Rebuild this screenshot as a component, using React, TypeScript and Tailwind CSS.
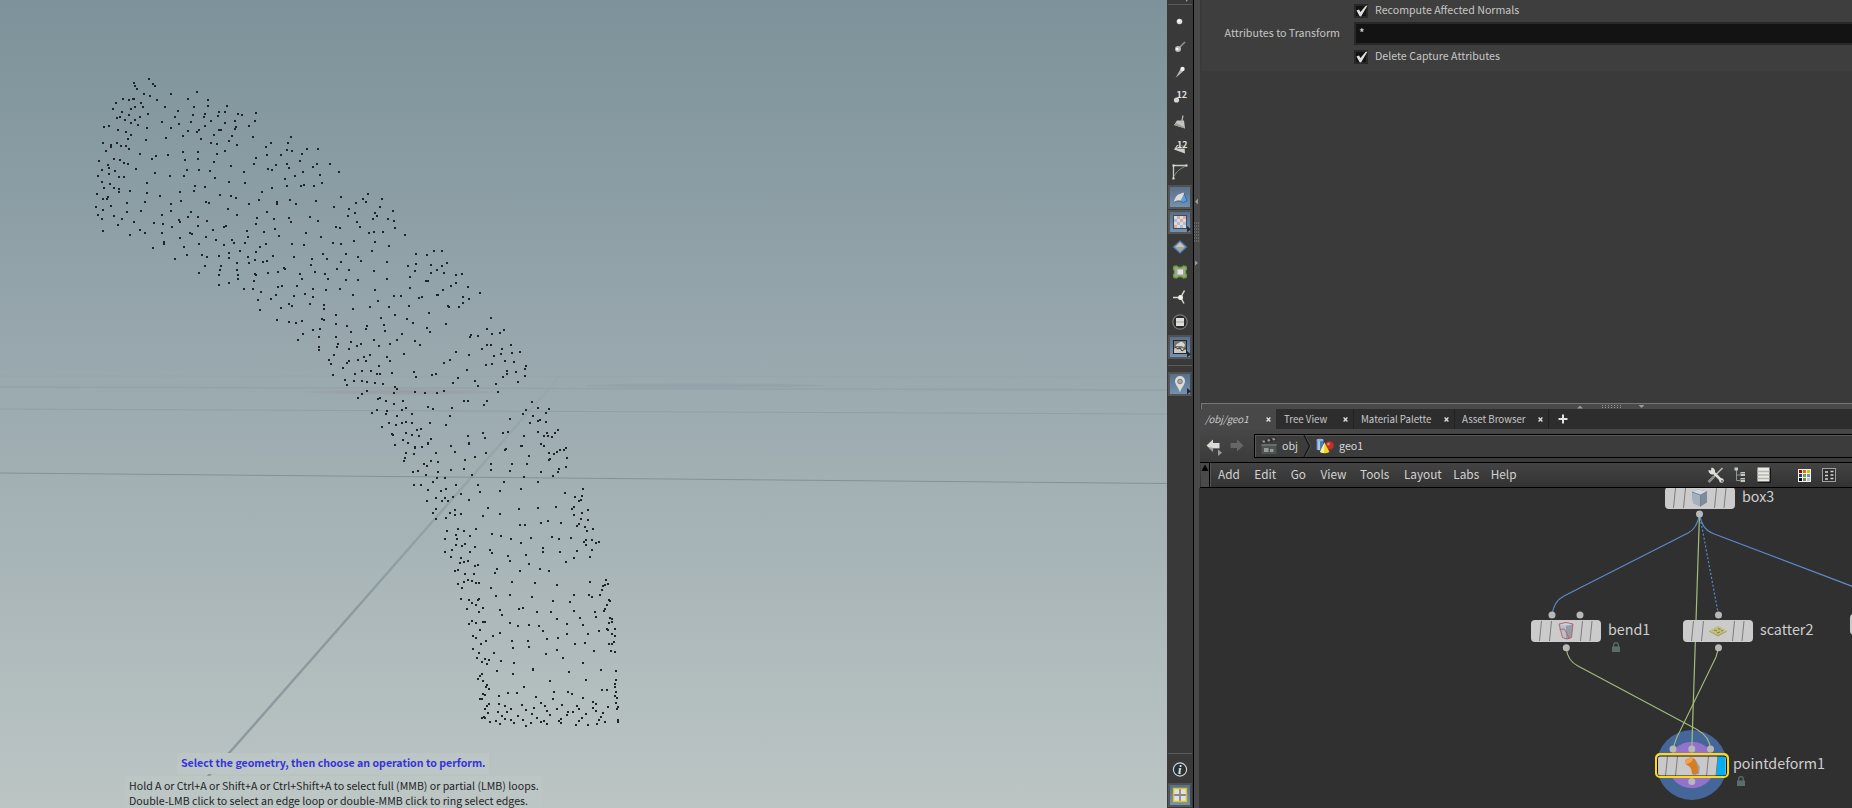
import React from "react";

/* ------------------------------------------------------------------ */
/* Point cloud: three patches, local coordinates in thirds of a pixel  */
/* ------------------------------------------------------------------ */

type Patch = { x: number; y: number; points: string };

const PATCHES: Patch[] = [
  {
    x: 80,
    y: 60,
    points:
      "207,56 162,69 166,79 171,87 220,73 226,79 191,101 210,109 230,121 274,101 352,96 324,117 385,120 384,139 441,139 129,117 147,121 159,118 162,117 108,128 184,130 99,147 153,147 165,141 189,141 127,156 148,164 203,162 256,142 293,152 343,141 339,166 374,162 417,156 435,156 414,168 372,171 474,162 485,165 528,159 525,184 120,171 110,174 134,181 165,180 180,171 153,189 174,194 245,186 285,171 296,192 333,186 392,184 434,189 464,182 506,197 71,202 88,197 114,210 138,216 200,204 274,205 376,198 469,202 466,208 422,210 417,210 324,213 356,211 350,217 308,227 363,237 402,226 456,228 448,244 519,231 153,225 144,237 197,241 258,234 392,250 412,253 471,255 69,250 111,250 93,256 93,262 123,258 138,258 148,268 77,272 179,282 217,297 228,289 264,285 308,275 355,277 314,301 354,297 412,282 435,274 57,303 103,296 121,299 133,309 144,312 402,307 453,318 83,316 87,323 67,330 106,332 169,328 88,341 117,351 132,351 53,349 226,339 270,348 312,349 321,330 357,331 391,334 404,353 448,366 66,367 90,372 72,384 102,384 117,386 116,395 150,394 201,369 201,399 241,409 345,378 375,381 341,394 300,396 420,405 452,407 468,414 51,402 69,417 84,411 80,418 94,437 48,441 142,429 195,426 272,431 302,424 378,427 386,429 445,447 472,466 68,450 53,466 66,477 102,468 125,477 141,457 183,453 163,486 115,496 69,514 150,526 180,511 194,520 222,489 249,492 245,466 273,453 333,456 324,472 354,471 297,481 300,486 381,483 276,501 353,499 433,501 439,499 399,511 246,519 330,519 337,523 379,532 409,541 301,535 252,546 252,551 218,564 312,562 357,552 321,586 285,597 367,586 381,590 417,589 448,580 447,594 432,555 456,541 463,550 481,572 470,608 374,619 358,638 422,619 421,629 417,645 471,630 474,646 474,657 447,669 417,675 495,549 632,230 624,249 574,249 558,262 681,266 714,267 621,270 636,274 561,285 604,284 667,281 528,294 523,311 661,303 588,316 621,311 627,324 565,327 576,330 712,311 698,320 751,313 493,335 670,335 776,337 645,348 719,345 615,357 494,370 576,384 621,378 663,379 672,375 702,378 726,370 546,396 537,420 508,431 591,427 592,433 631,419 648,432 708,423 783,411 762,441 561,456 530,475 581,476 626,475 634,487 690,471 713,484 528,492 585,508 500,514 552,516 598,529 678,519 722,531 768,501 780,504 504,530 539,560 558,552 636,552 672,555 528,576 504,590 580,588 643,592 730,581 696,597 741,597 759,550 784,553 797,582 782,607 525,600 508,610 550,607 562,604 612,624 614,627 593,636 565,639 525,642 528,645 523,664 660,642 693,615 705,636 736,643 745,658 666,656 772,627 807,630 798,660 606,678 594,681 651,679 699,687 738,689 780,687 491,688 519,687 543,696 587,704 533,721 574,718 643,708 674,702 699,710 690,732 626,733 637,739 603,744 731,734 733,748 539,750 864,402 848,417 859,427 906,416 828,429 900,441 807,447 826,460 884,458 890,469 938,453 805,469 879,478 924,476 942,483 831,487 840,501 944,504 866,520 883,517 910,517 822,543 885,546 926,559 875,572 834,590 843,604 921,607 882,633 922,658 834,661 886,690 819,706 943,709 895,724 869,742 927,741 819,747",
  },
  {
    x: 240,
    y: 180,
    points:
      "495,165 528,222 562,225 582,214 606,213 527,252 504,258 573,255 606,259 621,249 590,269 524,273 574,280 613,280 648,286 667,283 509,291 559,303 565,303 648,308 633,319 683,321 509,323 608,330 720,339 592,345 595,346 537,354 547,352 483,347 670,350 686,357 670,370 657,381 508,379 625,379 628,382 568,400 501,417 520,430 618,432 561,444 570,456 486,463 525,483 540,495 491,523 752,414 741,447 792,450 756,462 779,460 693,466 690,470 714,468 742,495 754,494 813,495 726,507 787,507 816,519 840,517 784,523 761,529 649,516 688,525 630,540 612,549 795,544 822,546 738,556 757,552 858,558 856,567 680,569 802,574 801,581 828,576 856,589 790,592 654,594 705,603 833,607 639,609 767,612 713,619 774,636 523,577 529,592 576,585 587,582 525,636 555,639 591,640 613,634 671,662 684,663 740,663 733,674 564,681 580,688 636,684 631,707 618,735 570,728 487,689 498,685 516,702 499,727 486,730 516,729 543,746 531,751 537,768 517,766 497,760 573,776 504,790 489,780 563,791 546,801 526,803 633,797 683,768 687,791 730,760 736,774 790,759 804,756 811,717 849,702 858,689 877,667 894,684 926,688 919,700 880,708 870,729 900,720 895,723 919,727 894,756 853,769 921,759 912,768 924,769 936,770 946,760 954,750 903,792 911,798 844,797 797,806 111,420 146,426 167,429 187,424 219,450 190,461 173,480 240,447 246,417 252,420 236,471 237,501 236,510 282,525 266,539 273,551 279,585 309,565 321,550 326,543 315,600 321,615 289,406 287,433 321,438 333,456 288,471 293,491 292,502 334,486 327,507 351,498 363,492 381,439 378,447 423,414 432,435 435,453 465,405 402,480 417,498 471,480 450,492 372,531 390,525 440,531 355,541 377,544 450,543 418,559 366,573 393,573 345,582 411,582 421,582 456,579 343,604 365,602 380,607 404,609 428,613 466,621 471,627 461,639 381,633 365,643 353,655 414,657 419,655 439,664 463,671 489,663 412,691 396,699 441,694 438,702 471,708 427,741 446,729 468,735 455,761 459,766 464,796",
  },
  {
    x: 340,
    y: 380,
    points:
      "164,196 198,219 222,222 195,234 193,244 226,202 246,201 264,190 287,218 332,197 345,216 387,190 405,230 438,219 494,210 497,207 545,197 566,227 603,192 612,198 628,219 643,222 651,216 661,209 672,210 678,205 681,233 630,238 628,241 251,253 261,258 274,243 294,246 218,277 234,273 295,277 258,286 291,294 315,294 279,306 333,271 372,268 375,240 454,252 453,271 517,253 560,253 510,273 603,276 658,266 678,260 653,277 639,287 553,290 397,286 222,315 243,315 264,330 303,333 318,327 348,315 413,314 492,307 593,307 480,333 542,327 419,336 364,341 339,351 315,354 306,363 324,364 288,354 261,363 387,360 729,326 675,339 727,347 705,351 722,360 718,363 289,388 279,399 345,389 330,400 345,405 363,402 318,414 288,418 444,385 429,408 480,403 537,388 593,384 648,381 703,380 695,386 745,391 727,398 702,405 722,417 744,420 717,431 711,438 735,442 741,453 760,446 540,435 554,435 604,430 624,424 663,429 355,446 321,453 371,453 409,448 347,464 390,468 314,478 350,477 456,462 483,468 512,477 574,475 543,489 636,471 657,477 693,474 738,480 732,486 738,494 756,480 767,488 776,486 347,495 376,492 366,498 405,501 337,510 316,517 391,517 450,511 456,519 333,531 363,534 504,529 510,543 558,525 609,504 609,516 659,516 712,514 756,510 750,530 703,534 677,547 360,550 372,546 385,543 405,558 414,555 566,553 344,574 354,570 375,582 402,582 464,578 472,567 540,574 601,567 628,573 384,601 396,603 373,607 353,613 408,609 418,610 366,624 515,606 585,610 454,625 652,616 751,606 798,600 804,613 796,616 790,618 785,631 780,645 748,646 757,651 467,647 510,646 575,652 363,657 386,659 418,656 414,660 396,669 407,675 381,688 430,684 418,697 480,690 486,705 537,688 550,685 592,697 633,697 640,663 691,666 702,646 701,694 651,717 806,661 809,664 800,675 796,686 792,694 765,697 768,711 810,714 817,716 721,714 396,723 407,729 387,732 430,725 434,727 420,749 509,730 535,739 567,734 597,739 610,754 681,732 729,736 807,728 815,725 802,747 805,749 825,748 815,762 824,767 778,753 744,762 399,769 408,773 458,769 479,760 438,784 423,792 399,807 516,784 565,783 519,803 567,802 621,777 654,773 682,763 705,792 736,788 807,791 815,791 823,787 813,812 825,816 761,813 652,811 618,822 670,834 417,819 462,819 411,834 434,837 446,840 426,846 442,851 484,842 522,848 730,850 578,870 580,867 471,874 520,883 688,877 783,870 828,873 420,888 426,882 415,896 429,902 629,903 739,899 828,899 440,915 437,920 446,926 552,921 825,913 825,920 786,930 801,930 429,941 435,946 477,949 503,938 531,940 643,936 684,935 697,941 588,951 638,957 729,954 829,937 826,948 831,954 421,957 426,957 446,973 441,977 435,987 477,972 494,979 545,976 604,968 615,978 667,976 652,986 711,979 717,988 758,967 769,973 759,983 769,992 804,981 828,970 833,980 831,988 444,999 474,996 502,997 513,987 486,1008 557,991 582,984 576,1002 621,994 630,1005 684,996 681,1005 698,997 738,1002 790,1000 427,1013 431,1011 435,1014 449,1027 469,1024 481,1033 496,1018 513,1020 522,1029 534,1008 549,1020 573,1029 591,1014 557,1038 602,1027 612,1023 620,1033 663,1017 656,1023 663,1028 717,1022 726,1014 709,1034 743,1034 783,1011 776,1021 771,1032 794,1025 834,1020 834,1025",
  },
];

const CLOUD = PATCHES.map((patch) =>
  patch.points
    .split(" ")
    .map((pair) => {
      const [px, py] = pair.split(",").map(Number);
      const x = Math.round(patch.x + px / 3 - 1);
      const y = Math.round(patch.y + py / 3);
      return `M${x} ${y}h2`;
    })
    .join(""),
).join("");

function Viewport() {
  return (
    <main className="relative w-[1167px] shrink-0 overflow-hidden bg-linear-to-b from-[#7d929a] via-[#9cabb0] to-[#bcc5c4]">
      <svg width="1167" height="808" viewBox="0 0 1167 808" className="block">
        <defs>
          <linearGradient id="axis" x1="0" y1="380" x2="0" y2="620" gradientUnits="userSpaceOnUse">
            <stop offset="0" stopColor="#84959b" stopOpacity="0.1" />
            <stop offset="1" stopColor="#8b9a9f" />
          </linearGradient>
          <radialGradient id="haze">
            <stop offset="0" stopColor="#978f95" stopOpacity="0.5" />
            <stop offset="1" stopColor="#978f95" stopOpacity="0.2" />
          </radialGradient>
        </defs>
        <g fill="none" stroke="#7b8f97">
          <path d="M0 387L1167 390" strokeOpacity="0.25" strokeWidth="1.5" />
          <path d="M0 376L1167 377" strokeOpacity="0.08" />
          <path d="M0 409L1167 414" strokeOpacity="0.4" />
          <path d="M0 473L1167 483.5" strokeOpacity="0.9" />
        </g>
        <ellipse cx="402" cy="392" rx="94" ry="2.8" fill="url(#haze)" />
        <ellipse cx="705" cy="385.5" rx="120" ry="2" fill="#84959b" fillOpacity="0.3" />
        <path d="M560 376L340 627L238 743L178 810" fill="none" stroke="url(#axis)" strokeWidth="2.5" />
        <path d={CLOUD} stroke="#202427" strokeWidth="2" shapeRendering="crispEdges" />
      </svg>
      <div className="absolute bottom-0 left-[125px] flex flex-col">
        <p className="ml-[52px] h-[21px] w-[312px] bg-[#bcc6c5] pl-[4px] text-[10.6px] leading-[19px] font-bold whitespace-nowrap text-[#3532dc]">
          Select the geometry, then choose an operation to perform.
        </p>
        <p className="mt-[2px] h-[32px] w-[417px] bg-[#bcc6c5] pt-[2px] pl-[4px] text-[10.6px] leading-[15px] whitespace-nowrap text-[#1e2324]">
          Hold A or Ctrl+A or Shift+A or Ctrl+Shift+A to select full (MMB) or partial (LMB) loops.
          <br />
          Double-LMB click to select an edge loop or double-MMB click to ring select edges.
        </p>
      </div>
    </main>
  );
}

/* ------------------------------------------------------------------ */
/* Display toolbar                                                     */
/* ------------------------------------------------------------------ */

function Tool({ on, children }: { on?: boolean; children: React.ReactNode }) {
  return (
    <div className="flex h-[25px] shrink-0 items-center justify-center">
      <div
        className={
          on
            ? "flex h-6 w-6 items-center justify-center border-2 border-r-[#454a50] border-b-[#575757] border-t-[#515151] border-l-[#555555] bg-linear-to-b from-[#597089] to-[#7391b1]"
            : "flex h-6 w-6 items-center justify-center"
        }
      >
        <svg width="20" height="20" viewBox="0 0 20 20" className="shrink-0 overflow-visible">
          {children}
        </svg>
      </div>
    </div>
  );
}

const Corner = () => <path d="M17 14v6.5l4-3.3z" fill="#262a2e" />;

const Rule = () => <div className="mx-px h-px shrink-0 bg-[#5a5a5a]" />;

function Toolbar() {
  return (
    <aside className="flex w-[26px] shrink-0 flex-col bg-[#393939]">
      <div className="flex h-[9px] shrink-0 flex-col">
        <div className="flex h-1 justify-end pr-1">
          <svg width="3" height="3">
            <path d="M0 0h2l-2 2z" fill="#999" />
          </svg>
        </div>
        <Rule />
      </div>
      <Tool>
        <circle cx="9.5" cy="9.5" r="2.8" fill="#dcdcd6" />
        <circle cx="9" cy="9" r="1.3" fill="#fff" />
      </Tool>
      <Tool>
        <path d="M8 12L15 5" stroke="#8b9093" strokeWidth="1.6" />
        <circle cx="8" cy="12" r="3" fill="#b9bab5" />
        <circle cx="7.3" cy="12" r="1.3" fill="#fff" />
      </Tool>
      <Tool>
        <path d="M5.5 16L10.500 7L13 9.500z" fill="#b4b7b5" />
        <circle cx="12.500" cy="7" r="2.2" fill="#f0f0ea" />
      </Tool>
      <Tool>
        <circle cx="6.5" cy="13" r="2.6" fill="#d6d6d0" />
        <text x="6.5" y="10.5" fontSize="9" fontWeight="700" fill="#e0e0e0">
          12
        </text>
      </Tool>
      <Tool>
        <path d="M7 8.5L14 8.500L15 16.500L4 13z" fill="#c6c7c3" />
        <path d="M4 13l11 3.500-1.500-2L6 11z" fill="#9b9b98" />
        <path d="M11.500 11L13 3.500" stroke="#b0b4b5" strokeWidth="1.3" />
      </Tool>
      <Tool>
        <path d="M7 8L14.500 9L15 16.500L4 12.500z" fill="#cfcfca" />
        <text x="7" y="10.500" fontSize="8.800" fontWeight="700" fill="#e4e4e4" stroke="#393939" strokeWidth="1.200" paintOrder="stroke">
          12
        </text>
      </Tool>
      <Tool>
        <path d="M3.500 17V3.500H17" fill="none" stroke="#c9c9c5" strokeWidth="1.300" />
        <path d="M16 4C11 6 5.500 10 4.500 14" fill="none" stroke="#7d9081" />
        <path d="M2.500 2.500h2v2h-2zM15.500 2.500h2v2h-2zM2.500 15.500h2v2h-2z" fill="#deded9" />
      </Tool>
      <Tool on>
        <path d="M10 14L14 6L17 14L13 15.500z" fill="#5f9be0" stroke="#2d5f9f" strokeWidth="0.800" />
        <path d="M3.700 15.500Q5 10 7.500 8Q10 6.500 13.500 5.500L14 7L10.500 14Q7 13 3.700 15.500z" fill="#dcdcd4" />
        <path d="M3.700 15.500Q7 13 10.500 14" fill="none" stroke="#4c4f50" strokeWidth="0.700" />
      </Tool>
      <Tool on>
        <rect x="3.500" y="3.500" width="13" height="13" fill="#dedad6" stroke="#434b55" />
        <path d="M7 4h3v3h-3zM13 4h3v3h-3zM4 13h3v3h-3zM10 7h3v3h-3z" fill="#d8abaa" />
        <path d="M4 7h3v3H4zM7 10h3v3H7zM13 10h3v3h-3zM10 13h3v3h-3z" fill="#a9bcd8" />
        <Corner />
      </Tool>
      <Tool>
        <path d="M10 4L16.500 10L10 16L3.500 10z" fill="#a5a59d" stroke="#4a7cba" strokeWidth="1.200" />
        <path d="M10 5.500L14.500 10H5.500z" fill="#c4c4be" />
        <path d="M10 6V14M6.500 10h7" stroke="#ececе6" strokeWidth="0.900" />
      </Tool>
      <Tool>
        <path
          d="M4 4.500l2.500-.5 2 1.500h3l2-1.500 2.500.5.500 2.500-1 2v2l1 2-.5 2.500-2.500.5-2-1.500h-3l-2 1.500-2.500-.5-.5-2.500 1-2v-2l-1-2z"
          fill="#a0a09c"
          stroke="#66a331"
          strokeWidth="1.300"
        />
        <path d="M7.500 7.500h5.500v5h-5.500z" fill="#e2e2dd" />
      </Tool>
      <Tool>
        <path d="M3 10.500h5M11.500 9l3-5.500M11.500 12l2.500 4.500" stroke="#d9d9d3" strokeWidth="1.500" fill="none" />
        <circle cx="10.500" cy="10.500" r="2.500" fill="#f2f2ec" />
      </Tool>
      <Tool>
        <circle cx="10" cy="10" r="7.200" fill="#2c2c2c" stroke="#787878" strokeWidth="1.200" />
        <path d="M6 6h8v8H6z" fill="#dededa" />
        <path d="M6 9.500h8v1H6z" fill="#a3a39f" />
      </Tool>
      <Tool on>
        <rect x="3.500" y="3.500" width="13" height="13" fill="#77776f" stroke="#23282d" />
        <path d="M6 9c0-3 3-2 4-4 2-1 4 1 5 3l-1 2-3-1z" fill="#d8d8d2" />
        <path d="M4 16v-4l3-2 3 2 2-1 4 2v3z" fill="#c9c9c2" />
        <path d="M5 10l3 2 2-1 2 3 4-3" fill="none" stroke="#32363a" />
        <Corner />
      </Tool>
      <div className="flex h-[12px] shrink-0 flex-col justify-center">
        <Rule />
      </div>
      <Tool on>
        <path d="M10 18.500C9 14 5 11 5 7a5 5 0 0 1 10 0c0 4-4 7-5 11.500z" fill="#dbdbd8" />
        <circle cx="10" cy="7.500" r="2.300" fill="#aaa" stroke="#777" />
        <Corner />
      </Tool>
      <div className="flex-1" />
      <Rule />
      <div className="h-[3px] shrink-0" />
      <Tool>
        <circle cx="10" cy="9.500" r="6.600" fill="#263238" stroke="#d8d8d8" strokeWidth="1.100" />
        <text x="8" y="13.500" fontSize="12.500" fontWeight="700" fontStyle="italic" fill="#e6e6e6" className="font-['Liberation_Serif',serif]">
          i
        </text>
      </Tool>
      <Tool on>
        <path d="M4 4h12v12H4z" fill="#e0e0e4" />
        <path d="M10 4v12M4 10h12" stroke="#8d8b80" strokeWidth="1.800" />
        <path d="M3.500 3.500h13v13h-13z" fill="none" stroke="#e0c21c" strokeWidth="1.400" />
      </Tool>
      <div className="h-px shrink-0" />
    </aside>
  );
}

/* ------------------------------------------------------------------ */
/* Splitters                                                           */
/* ------------------------------------------------------------------ */

function VerticalSplitter() {
  const rows = [0, 1, 2, 3, 4, 5, 6];
  return (
    <div className="flex w-[7px] shrink-0 flex-col border-l border-black bg-[#494949] pt-[198px]">
      <svg width="6" height="70" viewBox="0 0 6 70" className="shrink-0">
        <path d="M4 0.500v6L1 3.500z" fill="#999" />
        <path d="M1 62.500v5l3-2.500z" fill="#999" />
        {rows.map((row) => (
          <path key={row} d={`M0 ${25 + row * 3}h1m1 0h1m1 0h1`} stroke="#8b8b8b" />
        ))}
      </svg>
    </div>
  );
}

function HorizontalSplitter() {
  const dots = [0, 1, 2, 3, 4, 5, 6];
  return (
    <div className="ml-px flex h-[6px] shrink-0 border-t border-l border-[#777] bg-[#494949]">
      <svg width="650" height="5" viewBox="0 0 650 5" className="shrink-0">
        <path d="M375 4.500h6L378 1.500z" fill="#999" />
        <path d="M436.500 1h6L439.500 4z" fill="#999" />
        {dots.map((dot) => (
          <path key={dot} d={`M${400 + dot * 3} 1.500h1m-1 2h1`} stroke="#999" />
        ))}
      </svg>
    </div>
  );
}

/* ------------------------------------------------------------------ */
/* Parameters                                                          */
/* ------------------------------------------------------------------ */

function Toggle({ label }: { label: string }) {
  return (
    <div className="flex h-[14px] items-center">
      <span className="flex h-[14px] w-[14px] items-center justify-center border-2 border-[#282828] bg-[#131313]">
        <svg width="14" height="14" viewBox="0 0 14 14" className="shrink-0">
          <path d="M2.500 6.500L5 5.500L6.500 8L11.500 2L13.500 1.500L7 12.500L5.500 12z" fill="#dedede" />
        </svg>
      </span>
      <span className="-mt-[2px] ml-[7px] text-[10.65px] leading-[14px] text-[#c6c6c6]">{label}</span>
    </div>
  );
}

function Parameters() {
  return (
    <section className="flex h-[403px] shrink-0 flex-col bg-[#3a3a3a] pl-[2px]">
      <div className="flex h-[71px] flex-col bg-[#3e3e3e]">
        <div className="flex h-[18px] items-end pl-[152px]">
          <Toggle label="Recompute Affected Normals" />
        </div>
        <div className="mt-1 flex h-[23px] items-center">
          <span className="-mt-[2px] w-[152px] pr-[14px] text-right text-[10.7px] leading-[21px] whitespace-nowrap text-[#c6c6c6]">
            Attributes to Transform
          </span>
          <span className="h-[23px] flex-1 border-y-2 border-l-2 border-[#282828] bg-[#131313] pl-[3px] text-[12px] leading-[18px] text-[#dcdcdc]">
            *
          </span>
        </div>
        <div className="mt-[5px] pl-[152px]">
          <Toggle label="Delete Capture Attributes" />
        </div>
      </div>
    </section>
  );
}

/* ------------------------------------------------------------------ */
/* Network pane chrome                                                 */
/* ------------------------------------------------------------------ */

const Close = () => (
  <svg width="5" height="5" viewBox="0 0 5 5" className="shrink-0">
    <path d="M0.600 0.600l3.800 3.800M4.400 0.600l-3.800 3.800" stroke="#dcdcdc" strokeWidth="1.400" />
  </svg>
);

function Tabs() {
  return (
    <div className="flex h-[20px] shrink-0 bg-[#2d2d2d] text-[9.7px] leading-[19px] whitespace-nowrap text-[#c9c9c9]">
      <div className="flex w-[76px] items-center justify-between bg-[#484848] pr-[5px] pl-[5px] text-[9.7px] italic">
        <span>/obj/geo1</span>
        <Close />
      </div>
      <div className="flex w-[78px] items-center justify-between border-r border-[#222] pr-[5px] pl-2">
        <span>Tree View</span>
        <Close />
      </div>
      <div className="flex w-[101px] items-center justify-between border-r border-[#222] pr-[5px] pl-[7px]">
        <span>Material Palette</span>
        <Close />
      </div>
      <div className="flex w-[94px] items-center justify-between border-r border-[#222] pr-[5px] pl-[7px]">
        <span>Asset Browser</span>
        <Close />
      </div>
      <div className="flex items-center pl-[9px]">
        <svg width="10" height="10" viewBox="0 0 10 10">
          <path d="M5 0.500v9M0.500 5h9" stroke="#e2e2e2" strokeWidth="2" />
        </svg>
      </div>
    </div>
  );
}

function PathBar() {
  return (
    <div className="flex h-[33px] shrink-0 bg-linear-to-b from-[#474747] to-[#3b3b3b] pt-[5px] pb-[4px]">
      <div className="flex w-[54px] items-start pl-[6px]">
        <svg width="17" height="20" viewBox="0 0 17 20" className="mt-[2px]">
          <path d="M0.500 9.500L7 3.500v3.500h6.500v5H7V15.500z" fill="#dadad6" />
          <path d="M7 12h6.500v1H7V16.500L1 10.500z" fill="#8b8b88" fillOpacity="0.700" />
          <path d="M12 13.500l4 3.200-4 3.200z" fill="#9a9a9a" />
        </svg>
        <svg width="16" height="20" viewBox="0 0 16 20" className="mt-[2px] ml-[7px]">
          <path d="M13.500 9.500L7 3.500v3.500H.5v5H7V15.500z" fill="#666" />
        </svg>
      </div>
      <div className="flex h-6 flex-1 items-center border-y border-l border-black bg-[#3c3c3c] text-[10.7px] leading-[20px] text-[#d6d6d6] shadow-[inset_1px_1px_0_#5a5a5a]">
        <svg width="18" height="18" viewBox="0 0 18 18" className="ml-[5px]">
          <path d="M1 4L16 0.500l.5 3L2 6.500z" fill="#2b2b2b" />
          <path d="M2 3.800l2.500-.6 1 2L3 5.800zM7 2.700l2.500-.6 1 2L8 4.700zM12 1.500l2.500-.6 1 2-2.500.6z" fill="#999" />
          <path d="M1.500 7h15v10h-15z" fill="#4c5454" />
          <path d="M1.500 7h15v2h-15z" fill="#686d6d" />
          <path d="M4 11h4.500v4H4zM10 12h3.500v3h-3.500z" fill="#959b9b" />
        </svg>
        <span className="ml-[4px]">obj</span>
        <svg width="8" height="22" viewBox="0 0 8 22" className="ml-[5px]">
          <path d="M1 0l5.500 11L1 22" fill="none" stroke="#161616" strokeWidth="1.300" />
          <path d="M2.300 0l5.500 11L2.300 22" fill="none" stroke="#555" strokeWidth="0.700" />
        </svg>
        <svg width="18" height="16" viewBox="0 0 18 16" className="ml-[5px]">
          <path d="M0.500 2h7v9.500q-3.500 2-7 0z" fill="#4f7dbb" />
          <path d="M1.500 2h2.500v10H1.500z" fill="#a9c6e6" />
          <ellipse cx="4" cy="2" rx="3.500" ry="1.300" fill="#8fb4de" />
          <circle cx="13.500" cy="7.500" r="4.300" fill="#c22f27" />
          <circle cx="12.500" cy="6" r="1.500" fill="#e5776d" />
          <path d="M8.500 4.500L13.500 14q-5 2.500-9.500 0z" fill="#f0d723" />
          <path d="M8.500 4.500L8 15q-2.500 0-4-1z" fill="#fbf08e" />
        </svg>
        <span className="ml-[5px]">geo1</span>
      </div>
    </div>
  );
}

const SWATCHES = ["#b60000", "#e06a00", "#dcbc00", "#1f4287", "#5cb40e", "#6f92c4", "#0a0a0a", "#7d7d7d", "#c2c2be"];

function MenuBar() {
  return (
    <div className="flex h-[26px] shrink-0 border-y border-black bg-linear-to-b from-[#434343] to-[#333333]">
      <div className="ml-px flex w-[9px] justify-center border-r border-black bg-[#4a4a4a] pt-px">
        <svg width="8" height="8" viewBox="0 0 8 8" className="shrink-0">
          <path d="M4 0.500L7.500 7h-7z" fill="#050505" />
        </svg>
      </div>
      <nav className="flex w-[504px] items-start gap-[14.5px] border-l border-[#555] pl-[7px] text-[11.8px] leading-[22px] whitespace-nowrap text-[#d2d2d2]">
        <span>Add</span>
        <span>Edit</span>
        <span>Go</span>
        <span>View</span>
        <span className="-ml-px">Tools</span>
        <span>Layout</span>
        <span className="-ml-[3px]">Labs</span>
        <span className="-ml-[3px]">Help</span>
      </nav>
      <div className="flex items-center">
        <svg width="18" height="18" viewBox="0 0 18 18" className="-ml-[7px]">
          <path d="M2.500 15.500L9 8.500L15.500 2" stroke="#b4b4b0" strokeWidth="1.700" />
          <path d="M1.500 16L7 10.500" stroke="#8f8f8c" strokeWidth="2.600" />
          <path d="M5 5l9.500 9.500" stroke="#dededb" strokeWidth="2.700" />
          <path d="M1.500 4l2.500.5.500-3a4 4 0 0 1 3.500 5l-2 2a4 4 0 0 1-4.500-4.500z" fill="#dededb" />
          <circle cx="14.500" cy="14.500" r="2.300" fill="#dededb" />
          <circle cx="15" cy="15" r="0.900" fill="#555" />
        </svg>
        <svg width="12" height="16" viewBox="0 0 12 16" className="ml-[9px]">
          <path d="M2.500 3v10.500H6M2.500 8H6" fill="none" stroke="#8c9a92" />
          <path d="M0.500 0.500h3.500v3H0.500zM6.500 5h4.500v4H6.500zM6.500 11h4.500v4H6.500z" fill="#c6c8c3" />
          <path d="M6.500 6.500H11M6.500 12.500H11" stroke="#717470" />
        </svg>
        <svg width="14" height="16" viewBox="0 0 14 16" className="ml-[11px]">
          <path d="M1 1h13v15H1z" fill="#151515" />
          <path d="M0.500 0.500h12v14h-12z" fill="#e9e9e6" />
          <path d="M0.500 4.500h12M0.500 8h12M0.500 11.500h12" stroke="#b5b5af" strokeWidth="1.500" />
        </svg>
        <span className="ml-[27px] grid h-[13px] w-[13px] grid-cols-3 gap-px bg-[#f2f2f2] p-px">
          {SWATCHES.map((color) => (
            <span key={color} style={{ backgroundColor: color }} />
          ))}
        </span>
        <svg width="14" height="14" viewBox="0 0 14 14" className="ml-[11px]">
          <rect x="0.500" y="0.500" width="13" height="13" fill="#2e2e2e" stroke="#a0a0a0" />
          <path d="M3 4h3M3 7.500h3M3 11h3M8.500 3.500h3M8.500 7h3M8.500 10.500h3" stroke="#d6d6d6" strokeWidth="1.500" />
        </svg>
      </div>
    </div>
  );
}

/* ------------------------------------------------------------------ */
/* Node graph                                                          */
/* ------------------------------------------------------------------ */

function Icon({ kind }: { kind: "box" | "bend" | "scatter" | "deform" }) {
  if (kind === "box")
    return (
      <svg width="20" height="20" viewBox="0 0 20 20">
        <path d="M2 4l6-2.500 9 2v11L10.500 18.500 3 15z" fill="#7f8b98" />
        <path d="M2 4l6-2.500 9 2-6.500 3.500z" fill="#d0d9e0" />
        <path d="M2 4l8.500 3V18.500L3 15z" fill="#a3b1be" />
        <path d="M2 4l8.500 3L17 3.500M10.500 7V18.500" fill="none" stroke="#667380" strokeWidth="0.700" />
      </svg>
    );
  if (kind === "bend")
    return (
      <svg width="20" height="20" viewBox="0 0 20 20">
        <path d="M3 3q7-3 14 0l-1.500 13.500q-4.500 3-9 0z" fill="#949da5" />
        <path d="M3 3l7 1v14.500l-4-2z" fill="#b9c1c8" />
        <path d="M3 3q7-3 14 0-7 3-14 0z" fill="#ccd2d7" />
        <path d="M3 3q7-3 14 0l-1.500 13.500q-4.500 3-9 0zM8.500 8l5 10M3.500 8.500l5-.5" fill="none" stroke="#b3606a" strokeWidth="0.900" />
      </svg>
    );
  if (kind === "scatter")
    return (
      <svg width="20" height="20" viewBox="0 0 20 20">
        <path d="M1 10.500L10 5l9 5.500-9 5z" fill="#a39a60" />
        <path d="M1 9.800L10 5l9 4.800-9 4.500z" fill="#c6be80" />
        <path d="M6 9l3 1M10 7.500l2.500 1M9 12l3-1M13 10l2-.5" stroke="#8a8040" strokeWidth="1.200" />
      </svg>
    );
  return (
    <svg width="20" height="20" viewBox="0 0 20 20">
      <path d="M8 2l5 1 5 8-1 7-6 1z" fill="#8f8f8f" fillOpacity="0.700" />
      <path d="M3 4q5-3.500 8.500-2Q16 7 16 17q-3 2.500-6 .500Q9.500 10 4 8.500z" fill="#d57c25" />
      <path d="M3 4q5-3.500 8.500-2L9.500 6 4 8.500z" fill="#f1a14f" />
    </svg>
  );
}

function Lock({ className }: { className: string }) {
  return (
    <svg width="8" height="10" viewBox="0 0 8 10" className={className}>
      <path d="M1.700 5V3a2.300 2.300 0 0 1 4.600 0v2" fill="none" stroke="#5c6e6b" strokeWidth="1.200" />
      <path d="M0 4.500h8V10H0z" fill="#5c6e6b" />
    </svg>
  );
}

type NodeProps = {
  place: string;
  label: string;
  kind: "box" | "bend" | "scatter" | "deform";
  selected?: boolean;
};

function GraphNode({ place, label, kind, selected }: NodeProps) {
  return (
    <div className={`absolute flex items-center ${place}`}>
      <div
        className={
          selected
            ? "relative flex h-[25px] w-[74px] items-center justify-center overflow-hidden rounded-[5px] border-2 border-[#ffd90f] bg-[#c9c9c9]"
            : "relative flex h-[22px] w-[70px] items-center justify-center overflow-hidden rounded-[4px] bg-[#cbcbcb]"
        }
      >
        <svg width="70" height="22" viewBox="0 0 70 22" className="absolute">
          {selected && <path d="M60.500 1H68.500V21H59z" fill="#00aef4" />}
          <path d="M10.500 1L8.500 21M20.500 1L18.500 21M51.500 1L49.500 21M61 1L59 21" stroke="#7c7c7c" />
          {selected && <rect x="0.500" y="1" width="69" height="20" rx="2.500" fill="none" stroke="#16130a" />}
        </svg>
        <span className="relative">
          <Icon kind={kind} />
        </span>
      </div>
      <span
        className={
          selected
            ? "-mt-[5px] ml-[4px] text-[14.3px] leading-[16px] whitespace-nowrap text-[#cfcfcf]"
            : "-mt-[4px] ml-[7px] text-[14.3px] leading-[16px] whitespace-nowrap text-[#cfcfcf]"
        }
      >
        {label}
      </span>
    </div>
  );
}

const PORTS = [
  [500.500, 26],
  [353, 127],
  [381, 127],
  [367.300, 159.700],
  [519.500, 127],
  [519.500, 159.700],
  [474, 261],
  [492.800, 261],
  [511.500, 261],
  [492.800, 293.500],
];

function NodeGraph() {
  return (
    <section className="relative -ml-px min-h-0 flex-1 overflow-hidden bg-[#303030]">
      <svg width="653" height="320" viewBox="0 0 653 320" className="absolute top-0 left-0">
        <circle cx="492.800" cy="277" r="35" fill="#456698" />
        <circle cx="492.800" cy="277" r="23.300" fill="#9373ca" />
        <g fill="none" stroke="#5b8aca" strokeWidth="1.200">
          <path d="M500.500 26C499 36 495 42 489 45L365 108C357 112 354 119 353 127" />
          <path d="M500.500 26C502 36 507 43 514 45.500L655 99" />
          <path d="M500.500 26L519.500 127" strokeDasharray="2 2" />
        </g>
        <g fill="none" stroke="#a2bd7c" strokeWidth="1.100">
          <path d="M500.500 26L492.800 261" strokeWidth="1.200" />
          <path d="M367.300 160C368 168 371 174 379 178L498 241.500C506 246 511 252 511.500 261" />
          <path d="M519.500 160L517 169L481 243Q477 250 474 261" />
        </g>
        <g fill="#b8b8b8">
          {PORTS.map(([x, y]) => (
            <circle key={`${x}-${y}`} cx={x} cy={y} r="3.500" />
          ))}
        </g>
      </svg>
      <GraphNode place="top-[-1px] left-[466px]" label="box3" kind="box" />
      <GraphNode place="top-[132px] left-[332px]" label="bend1" kind="bend" />
      <GraphNode place="top-[132px] left-[484px]" label="scatter2" kind="scatter" />
      <GraphNode place="top-[265px] left-[456px]" label="pointdeform1" kind="deform" selected />
      <Lock className="absolute top-[154px] left-[413px]" />
      <Lock className="absolute top-[288px] left-[538px]" />
      <div className="absolute top-[126px] left-[651px] h-[21px] w-3 rounded-[4px] bg-[#cbcbcb]" />
    </section>
  );
}

export default function App() {
  return (
    <div className="flex h-[808px] w-[1852px] overflow-hidden bg-[#303030] font-['Noto_Sans_CJK_SC','Noto_Sans',sans-serif]">
      <Viewport />
      <Toolbar />
      <VerticalSplitter />
      <div className="flex min-w-0 flex-1 flex-col bg-[#3a3a3a]">
        <Parameters />
        <HorizontalSplitter />
        <Tabs />
        <PathBar />
        <MenuBar />
        <NodeGraph />
      </div>
    </div>
  );
}
